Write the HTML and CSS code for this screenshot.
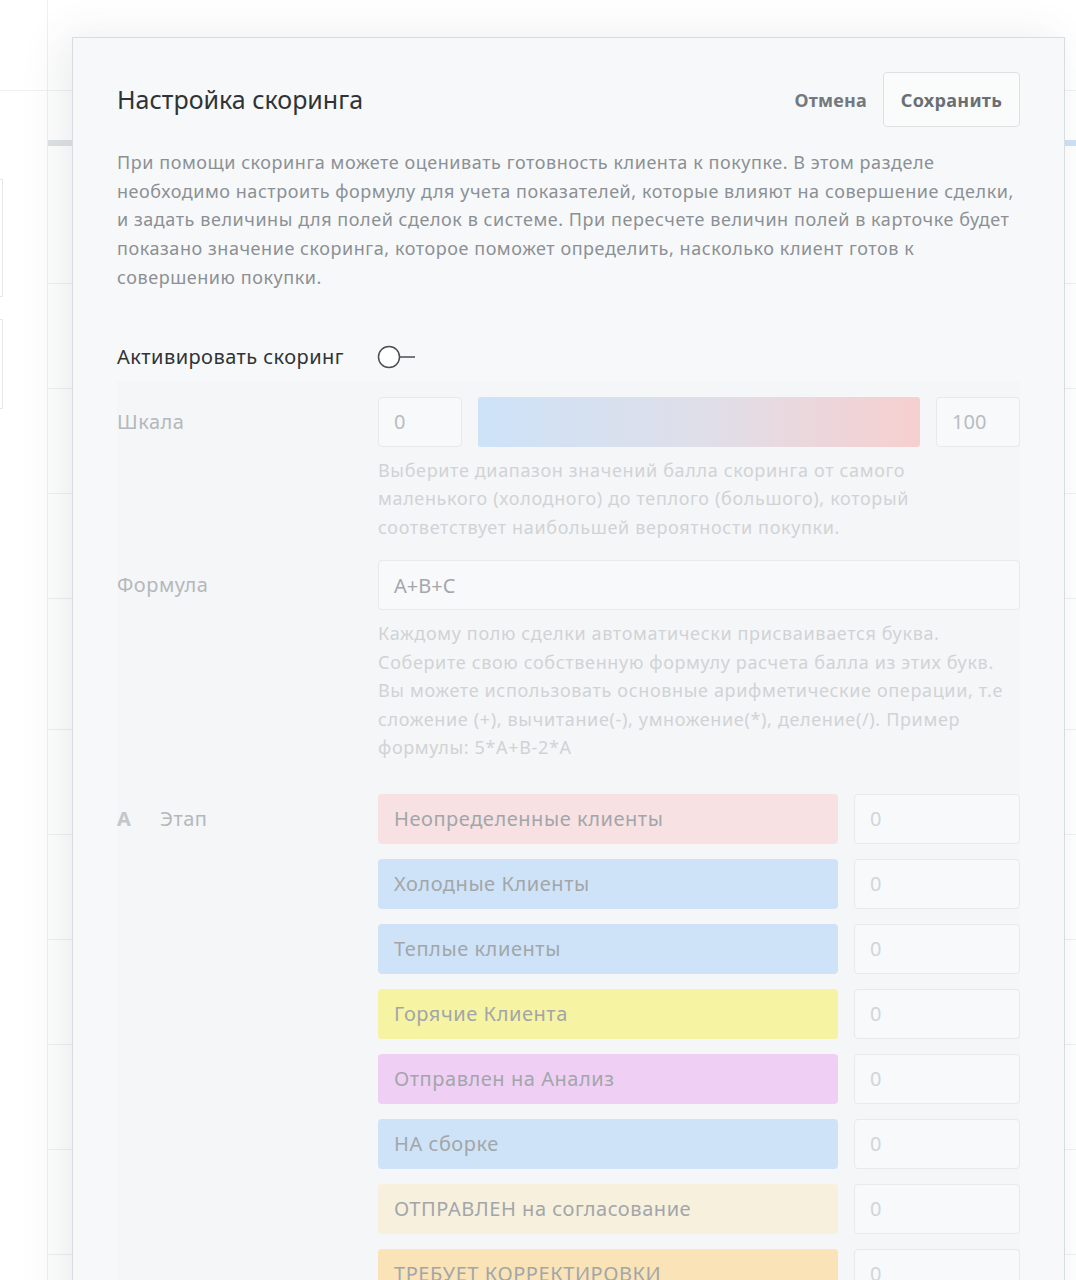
FILE: index.html
```html
<!DOCTYPE html>
<html lang="ru">
<head>
<meta charset="utf-8">
<title>Настройка скоринга</title>
<link rel="stylesheet" href="styles.css">
</head>
<body>
<div class="app">
  <div class="app-left">
    <div class="left-top"></div>
    <div class="left-box"></div>
    <div class="left-box small"></div>
  </div>
  <div class="app-main">
    <div class="main-head"></div>
    <div class="main-bar"></div>
    <div class="main-rows">
      <div class="main-row first"></div><div class="main-row"></div><div class="main-row"></div>
      <div class="main-row"></div><div class="main-row tall"></div><div class="main-row"></div>
      <div class="main-row"></div><div class="main-row"></div><div class="main-row"></div>
      <div class="main-row"></div>
    </div>
  </div>
</div>

<div class="modal">
  <div class="modal-head">
    <h1 class="modal-title">Настройка скоринга</h1>
    <div class="modal-actions">
      <button class="btn-link">Отмена</button>
      <button class="btn-save">Сохранить</button>
    </div>
  </div>
  <p class="modal-desc">При помощи скоринга можете оценивать готовность клиента к покупке. В этом разделе<br>необходимо настроить формулу для учета показателей, которые влияют на совершение сделки,<br>и задать величины для полей сделок в системе. При пересчете величин полей в карточке будет<br>показано значение скоринга, которое поможет определить, насколько клиент готов к<br>совершению покупки.</p>

  <div class="activate-row">
    <span class="activate-label">Активировать скоринг</span>
    <svg class="toggle" width="40" height="26" viewBox="0 0 40 26"><circle cx="12" cy="13" r="10.5" fill="#fff" stroke="#4a4f54" stroke-width="1.5"/><line x1="22.5" y1="13" x2="38" y2="13" stroke="#4a4f54" stroke-width="1.5"/></svg>
  </div>

  <div class="disabled-area">
    <div class="field">
      <div class="field-label">Шкала</div>
      <div class="field-body">
        <div class="scale">
          <div class="input small-input">0</div>
          <div class="gradient"></div>
          <div class="input small-input">100</div>
        </div>
        <p class="hint">Выберите диапазон значений балла скоринга от самого<br>маленького (холодного) до теплого (большого), который<br>соответствует наибольшей вероятности покупки.</p>
      </div>
    </div>

    <div class="field">
      <div class="field-label">Формула</div>
      <div class="field-body">
        <div class="input formula">A+B+C</div>
        <p class="hint">Каждому полю сделки автоматически присваивается буква.<br>Соберите свою собственную формулу расчета балла из этих букв.<br>Вы можете использовать основные арифметические операции, т.е<br>сложение (+), вычитание(-), умножение(*), деление(/). Пример<br>формулы: 5*A+B-2*A</p>
      </div>
    </div>

    <div class="field stage-field">
      <div class="field-label"><span class="letter">A</span>Этап</div>
      <div class="field-body stages">
        <div class="stage"><div class="pill pink">Неопределенные клиенты</div><div class="input value">0</div></div>
        <div class="stage"><div class="pill blue">Холодные Клиенты</div><div class="input value">0</div></div>
        <div class="stage"><div class="pill blue">Теплые клиенты</div><div class="input value">0</div></div>
        <div class="stage"><div class="pill yellow">Горячие Клиента</div><div class="input value">0</div></div>
        <div class="stage"><div class="pill purple">Отправлен на Анализ</div><div class="input value">0</div></div>
        <div class="stage"><div class="pill blue">НА сборке</div><div class="input value">0</div></div>
        <div class="stage"><div class="pill cream">ОТПРАВЛЕН на согласование</div><div class="input value">0</div></div>
        <div class="stage"><div class="pill orange">ТРЕБУЕТ КОРРЕКТИРОВКИ</div><div class="input value">0</div></div>
      </div>
    </div>
  </div>
</div>
</body>
</html>
```

FILE: styles.css
```css
* { box-sizing: border-box; }
html, body {
  margin: 0;
  padding: 0;
  width: 1076px;
  height: 1280px;
  overflow: hidden;
  background: #fff;
  font-family: "Noto Sans", "Open Sans", sans-serif;
}

/* background application */
.app {
  display: flex;
  height: 1280px;
}
.app-left {
  width: 48px;
  flex: none;
  border-right: 1px solid #eef0f2;
  display: flex;
  flex-direction: column;
}
.app-left > div { flex: none; }
.left-top {
  height: 91px;
  border-bottom: 1px solid #eef0f2;
}
.left-box {
  margin-top: 88px;
  height: 118px;
  border: 1px solid #e6e8ea;
  border-left: none;
  width: 3px;
}
.left-box.small {
  margin-top: 22px;
  height: 90px;
}
.app-main {
  flex: 1;
  display: flex;
  flex-direction: column;
}
.app-main > div { flex: none; }
.main-head {
  height: 91px;
  border-bottom: 1px solid #eef0f2;
}
.main-bar {
  margin-top: 49px;
  height: 6px;
  background: linear-gradient(90deg, #dfe2e5 0, #dfe2e5 1010px, #cfe2f5 1010px);
}
.main-rows {
  display: flex;
  flex-direction: column;
}
.main-row {
  flex: none;
  height: 105px;
  border-bottom: 1px solid #eef0f2;
}
.main-row.first { height: 138px; }
.main-row.tall { height: 131px; }

/* modal */
.modal {
  position: absolute;
  left: 72px;
  top: 37px;
  width: 993px;
  height: 1300px;
  background: #f7f8f9;
  border: 1px solid #d8dde1;
  box-shadow: -10px 0 40px rgba(60, 70, 80, 0.10);
  padding: 34px 44px 0 44px;
}
.modal-head {
  display: flex;
  align-items: center;
  justify-content: space-between;
  height: 55px;
}
.modal-title {
  margin: -2px 0 0 0;
  font-size: 25px;
  font-weight: 400;
  color: #2f3336;
}
.modal-actions {
  display: flex;
  align-items: center;
  gap: 4px;
}
.btn-link, .btn-save {
  font-family: inherit;
  font-size: 18px;
  font-weight: 700;
  color: #74797e;
  background: none;
  border: none;
  cursor: pointer;
}
.btn-link {
  padding: 0 12px;
  letter-spacing: 0.2px;
}
.btn-save {
  height: 55px;
  width: 137px;
  border: 1px solid #dde1e4;
  border-radius: 4px;
  background: #fafbfb;
  color: #6a6f74;
  letter-spacing: 0.3px;
}
.modal-desc {
  margin: 21px 0 0 0;
  font-size: 18px;
  line-height: 28.7px;
  color: #8b9095;
  letter-spacing: 0.55px;
}

.activate-row {
  display: flex;
  align-items: center;
  height: 44px;
  margin-top: 43px;
}
.activate-label {
  width: 261px;
  font-size: 20px;
  letter-spacing: 0.45px;
  color: #2f3336;
}
.toggle {
  display: block;
  margin-left: -1px;
}

.disabled-area {
  background: #f5f6f7;
  padding-top: 16px;
  margin-top: 2px;
}
.field {
  display: flex;
  margin-bottom: 19px;
}
.field-label {
  width: 261px;
  flex: none;
  height: 49px;
  display: flex;
  align-items: center;
  font-size: 20px;
  letter-spacing: 0.5px;
  color: #b4b8bc;
}
.field-body {
  flex: 1;
}
.scale {
  display: flex;
  gap: 16px;
}
.input {
  height: 50px;
  border: 1px solid #e7e9eb;
  border-radius: 4px;
  background: #f8f9fa;
  display: flex;
  align-items: center;
  padding: 0 15px;
  font-size: 20px;
  color: #b8bcc0;
}
.small-input {
  width: 84px;
  flex: none;
}
.gradient {
  flex: 1;
  height: 50px;
  border-radius: 3px;
  background: linear-gradient(90deg, #cde2f8 0%, #dfdfe9 50%, #f6cfcf 100%);
}
.formula {
  color: #a3a7ab;
}
.hint {
  margin: 9px 0 0 0;
  font-size: 18px;
  line-height: 28.5px;
  color: #d0d3d6;
  letter-spacing: 0.65px;
}
.stage-field {
  margin-top: 32px;
}
.letter {
  font-weight: 700;
  width: 43px;
  color: #c3c7ca;
}
.stages {
  display: flex;
  flex-direction: column;
  gap: 15px;
}
.stage {
  display: flex;
  gap: 16px;
}
.pill {
  width: 460px;
  height: 50px;
  border-radius: 4px;
  display: flex;
  align-items: center;
  padding: 0 16px;
  font-size: 20px;
  letter-spacing: 0.55px;
  color: #a2a6aa;
}
.value {
  flex: 1;
  color: #d2d5d8;
}
.pink { background: #f8e1e2; }
.blue { background: #cee3f7; }
.yellow { background: #f6f3a2; }
.purple { background: #efd0f4; }
.cream { background: #f7f0dd; }
.orange { background: #fae3b6; }
```
